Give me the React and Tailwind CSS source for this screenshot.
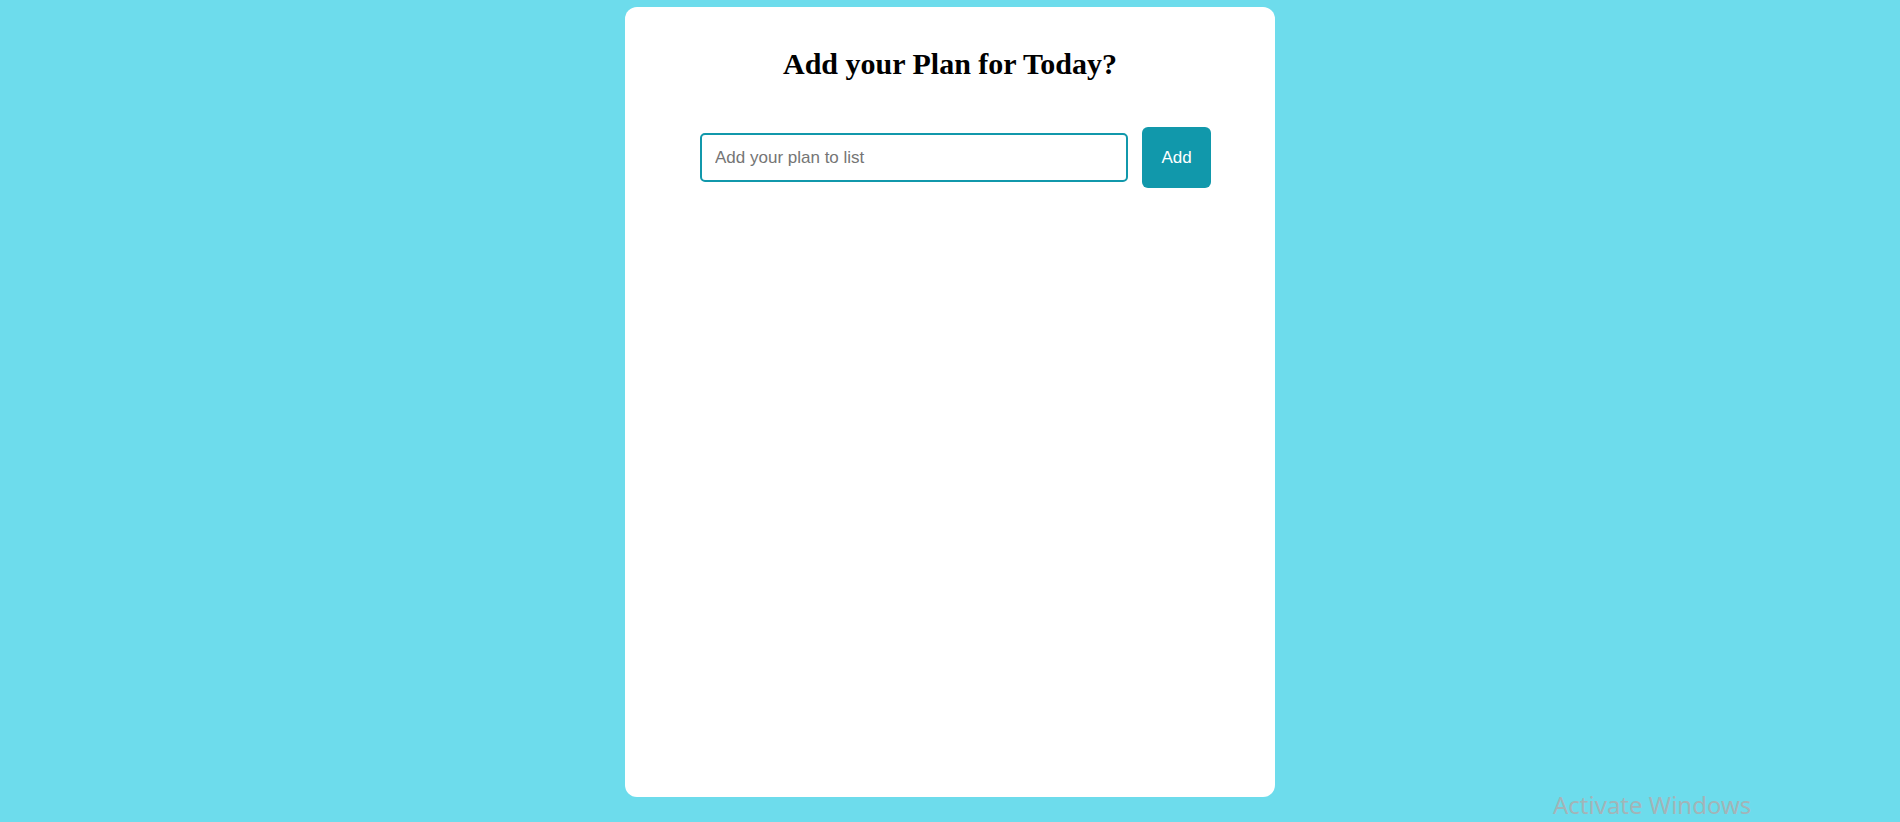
export default function App() {
  return (
    <div className="relative flex min-h-[822px] w-full justify-center overflow-hidden bg-[#6ddcec] pt-[7px]">
      <div className="flex h-[790px] w-[650px] flex-col rounded-[12px] bg-white pt-[42px]">
        <h2 className="text-center font-['Liberation_Serif','Times_New_Roman',serif] text-[30px] leading-[30px] font-bold text-black">
          Add your Plan for Today?
        </h2>
        <div className="mt-[48px] flex items-center gap-[14px] pl-[75px] pr-[64px] font-['Liberation_Sans',Arial,sans-serif]">
          <input
            type="text"
            placeholder="Add your plan to list"
            className="h-[49px] flex-1 rounded-[5px] border-2 border-[#1198ab] pl-[13px] text-[17px] text-black outline-none placeholder:text-[#757575]"
          />
          <button className="h-[61px] w-[69px] rounded-[6px] bg-[#1198ab] text-[17px] text-white">
            Add
          </button>
        </div>
      </div>
      <div className="pointer-events-none absolute top-[787px] left-[1553px] font-['Noto_Sans','Open_Sans',sans-serif] text-[24px] text-[#a3b4b8]">
        Activate Windows
      </div>
    </div>
  );
}
